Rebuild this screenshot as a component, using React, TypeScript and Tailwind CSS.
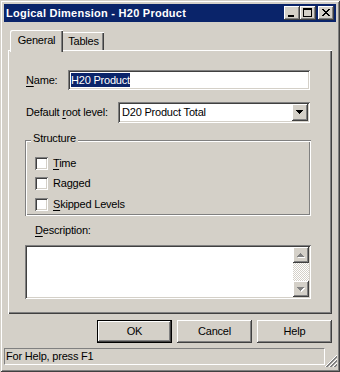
const raised =
  "shadow-[inset_-1px_-1px_0_#404040,inset_1px_1px_0_#fff,inset_-2px_-2px_0_#808080]";
const sunken =
  "shadow-[inset_1px_1px_0_#808080,inset_-1px_-1px_0_#fff,inset_2px_2px_0_#404040,inset_-2px_-2px_0_#d4d0c8]";
const etched =
  "shadow-[inset_1px_1px_0_#808080,inset_-1px_-1px_0_#fff,inset_2px_2px_0_#fff,inset_-2px_-2px_0_#808080]";

function Key({ k }: { k: string }) {
  return <span className="underline underline-offset-[2px]">{k}</span>;
}

function CaptionButton({ children }: { children: React.ReactNode }) {
  return (
    <div className={`w-[16px] h-[14px] bg-[#d4d0c8] ${raised}`}>
      <svg width="16" height="14" shapeRendering="crispEdges">
        {children}
      </svg>
    </div>
  );
}

function closeGlyph() {
  const px = [];
  for (let r = 0; r < 7; r++) {
    px.push(<rect key={`a${r}`} x={4 + r} y={3 + r} width="2" height="1" />);
    px.push(<rect key={`b${r}`} x={10 - r} y={3 + r} width="2" height="1" />);
  }
  return px;
}

function TitleBar() {
  return (
    <div className="h-[18px] bg-[#0a246a] flex items-center pl-[2px] pr-[2px]">
      <div className="flex-1 text-white font-bold tracking-[0.25px]">Logical Dimension - H20 Product</div>
      <div className="flex">
        <CaptionButton>
          <rect x="4" y="9" width="6" height="2" />
        </CaptionButton>
        <CaptionButton>
          <rect x="3" y="2" width="9" height="2" />
          <rect x="3" y="2" width="1" height="9" />
          <rect x="11" y="2" width="1" height="9" />
          <rect x="3" y="10" width="9" height="1" />
        </CaptionButton>
        <div className="ml-[2px]">
          <CaptionButton>{closeGlyph()}</CaptionButton>
        </div>
      </div>
    </div>
  );
}

function Tabs() {
  return (
    <div className="flex items-end h-[20px] pl-[2px]">
      <div className="relative z-10 w-[53px] h-[22px] -mb-[2px] bg-[#d4d0c8] rounded-tl-[2px] flex items-center justify-center pb-[2px] shadow-[inset_1px_1px_0_#fff,inset_-1px_0_0_#404040,inset_-2px_0_0_#808080]">
        General
      </div>
      <div className="w-[41px] h-[18px] flex items-center justify-center shadow-[inset_0_1px_0_#fff,inset_-1px_0_0_#404040,inset_-2px_0_0_#808080]">
        Tables
      </div>
    </div>
  );
}

function Arrow({ up, disabled }: { up?: boolean; disabled?: boolean }) {
  const rows = [7, 5, 3, 1];
  const order = up ? [...rows].reverse() : rows;
  const draw = (dx: number, dy: number, fill: string) =>
    order.map((w, i) => (
      <rect key={`${fill}${i}`} x={(7 - w) / 2 + dx} y={i + dy} width={w} height="1" fill={fill} />
    ));
  return (
    <svg width="8" height="5" shapeRendering="crispEdges">
      {disabled && draw(1, 1, "#fff")}
      {draw(0, 0, disabled ? "#808080" : "#000")}
    </svg>
  );
}

function Checkbox({ label }: { label: React.ReactNode }) {
  return (
    <div className="flex items-center h-[13px]">
      <div className={`w-[13px] h-[13px] bg-white ${sunken}`} />
      <span className="ml-[5px]">{label}</span>
    </div>
  );
}

function Panel() {
  return (
    <div className="h-[264px] pt-[20px] shadow-[inset_1px_1px_0_#fff,inset_-1px_-1px_0_#404040,inset_-2px_-2px_0_#808080]">
      <div className="flex items-center h-[20px] pl-[18px]">
        <span className="w-[42px]">
          <Key k="N" />ame:
        </span>
        <div className={`w-[242px] h-[20px] bg-white flex items-center pl-[3px] ${sunken}`}>
          <span className="bg-[#0a246a] text-white h-[14px] leading-[14px]">H20 Product</span>
        </div>
      </div>

      <div className="flex items-center h-[21px] pl-[18px] mt-[12px]">
        <span className="w-[92px]">
          Default <Key k="r" />oot level:
        </span>
        <div className={`w-[192px] h-[21px] bg-white flex items-center p-[2px] ${sunken}`}>
          <span className="flex-1 pl-[2px]">D20 Product Total</span>
          <div className={`w-[16px] h-[17px] bg-[#d4d0c8] flex items-center justify-center ${raised}`}>
            <Arrow />
          </div>
        </div>
      </div>

      <div className={`relative mt-[17px] ml-[17px] w-[286px] h-[76px] pt-[17px] pl-[10px] ${etched}`}>
        <span className="absolute left-[6px] -top-[8px] px-[2px] bg-[#d4d0c8]">Structure</span>
        <Checkbox label={<><Key k="T" />ime</>} />
        <div className="mt-[7px]">
          <Checkbox label="Ragged" />
        </div>
        <div className="mt-[8px]">
          <Checkbox label={<><Key k="S" />kipped Levels</>} />
        </div>
      </div>

      <div className="mt-[8px] pl-[27px]">
        <Key k="D" />escription:
      </div>

      <div className={`mt-[8px] ml-[17px] w-[286px] h-[54px] bg-white flex justify-end p-[2px] ${sunken}`}>
        <div className="w-[16px] flex flex-col">
          <div className={`h-[16px] bg-[#d4d0c8] flex items-center justify-center ${raised}`}>
            <Arrow up disabled />
          </div>
          <div className="flex-1 bg-[image:repeating-conic-gradient(#fff_0_25%,#d4d0c8_0_50%)] bg-[length:2px_2px]" />
          <div className={`h-[16px] bg-[#d4d0c8] flex items-center justify-center ${raised}`}>
            <Arrow disabled />
          </div>
        </div>
      </div>
    </div>
  );
}

function Buttons() {
  const btn = `w-[75px] h-[23px] bg-[#d4d0c8] flex items-center justify-center ${raised}`;
  return (
    <div className="flex justify-end gap-[5px] mt-[6px]">
      <div className="w-[75px] h-[23px] border border-black">
        <div className={`w-full h-full flex items-center justify-center ${raised}`}>OK</div>
      </div>
      <div className={btn}>Cancel</div>
      <div className={btn}>Help</div>
    </div>
  );
}

function StatusBar() {
  const ridges = [12, 8, 4];
  return (
    <div className="mt-[5px] h-[17px] flex">
      <div className="flex-1 flex items-center pl-[1px] border border-t-[#808080] border-l-[#808080] border-r-white border-b-white">
        For Help, press F1
      </div>
      <div className="w-[11px] flex items-end justify-end">
        <svg width="12" height="12" shapeRendering="crispEdges" className="-mr-[1px] mb-[-2px]">
          {ridges.map((c) => (
            <g key={c}>
              <line x1={12} y1={12 - c} x2={12 - c} y2={12} stroke="#fff" />
              <line x1={12} y1={13 - c} x2={13 - c} y2={12} stroke="#808080" />
              <line x1={12} y1={14 - c} x2={14 - c} y2={12} stroke="#808080" />
            </g>
          ))}
        </svg>
      </div>
    </div>
  );
}

export default function App() {
  return (
    <div className="w-[340px] h-[372px] bg-[#d4d0c8] p-[4px] flex flex-col font-[Liberation_Sans,Arial,sans-serif] text-[11px] leading-[13px] tracking-[-0.2px] text-black shadow-[inset_1px_1px_0_#d4d0c8,inset_-1px_-1px_0_#404040,inset_2px_2px_0_#fff,inset_-2px_-2px_0_#808080]">
      <TitleBar />
      <div className="px-[4px] pt-[8px]">
        <Tabs />
        <Panel />
        <Buttons />
      </div>
      <StatusBar />
    </div>
  );
}
